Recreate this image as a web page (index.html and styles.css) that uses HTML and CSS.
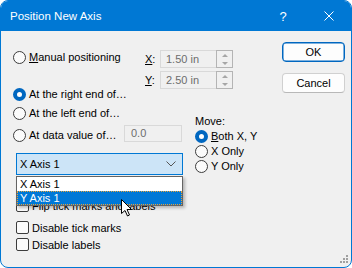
FILE: index.html
```html
<!DOCTYPE html>
<html>
<head>
  <meta charset="UTF-8">
  <title>Position New Axis</title>
  <link rel="stylesheet" href="styles.css">
</head>
<body>
  <div class="window">
    <div class="titlebar">
      <span class="title">Position New Axis</span>
      <span class="tb-btn help">?</span>
      <span class="tb-btn close">
        <svg width="10" height="10" viewBox="0 0 10 10"><path d="M0.5 0.5 L9.5 9.5 M9.5 0.5 L0.5 9.5" stroke="#fff" stroke-width="1"/></svg>
      </span>
    </div>

    <div class="client">
      <div class="left">
        <div class="row-manual">
          <label class="radio"><span class="circle"></span><span><u>M</u>anual positioning</span></label>
          <div class="xy">
            <span class="xy-label"><u>X</u>:</span>
            <div class="spin-field">
              <span class="spin-value">1.50 in</span>
              <span class="spin-btns"><i class="arrow-up"></i><i class="arrow-down"></i></span>
            </div>
            <span class="xy-label"><u>Y</u>:</span>
            <div class="spin-field">
              <span class="spin-value">2.50 in</span>
              <span class="spin-btns"><i class="arrow-up"></i><i class="arrow-down"></i></span>
            </div>
          </div>
        </div>

        <label class="radio opt-right"><span class="circle checked"></span><span>At the right end of…</span></label>

        <div class="lower">
          <div class="lower-main">
            <label class="radio"><span class="circle"></span><span>At the left end of…</span></label>
            <div class="data-row">
              <label class="radio"><span class="circle"></span><span>At data value of…</span></label>
              <span class="data-field">0.0</span>
            </div>
            <div class="combo-wrap">
              <div class="combo">
                <span>X Axis 1</span>
                <svg width="10" height="6" viewBox="0 0 10 6"><path d="M0.5 0.5 L5 5 L9.5 0.5" fill="none" stroke="#555" stroke-width="1"/></svg>
              </div>
              <ul class="combo-list">
                <li>X Axis 1</li>
                <li class="selected">Y Axis 1</li>
              </ul>
            </div>
            <div class="checks">
              <label class="check flip"><span class="box"></span><span>Flip tick marks and labels</span></label>
              <label class="check"><span class="box"></span><span>Disable tick marks</span></label>
              <label class="check"><span class="box"></span><span>Disable labels</span></label>
            </div>
          </div>

          <div class="move">
            <div class="move-title">Move:</div>
            <label class="radio"><span class="circle checked"></span><span><u>B</u>oth X, Y</span></label>
            <label class="radio"><span class="circle"></span><span>X Only</span></label>
            <label class="radio"><span class="circle"></span><span>Y Only</span></label>
          </div>
        </div>
      </div>

      <div class="buttons">
        <button class="btn default">OK</button>
        <button class="btn">Cancel</button>
      </div>
    </div>

    <svg class="cursor" width="12" height="18" viewBox="0 0 12 18">
      <path d="M0.5 0.5 L0.5 14.5 L4 11.5 L6.5 17 L8.5 16 L6 10.5 L10.5 10.5 Z" fill="#fff" stroke="#000" stroke-width="1" stroke-linejoin="round"/>
    </svg>

    <svg class="grip" width="10" height="10" viewBox="0 0 10 10">
      <rect x="7" y="0" width="2" height="2" fill="#a0a0a0"/>
      <rect x="4" y="3" width="2" height="2" fill="#a0a0a0"/>
      <rect x="7" y="3" width="2" height="2" fill="#a0a0a0"/>
      <rect x="1" y="6" width="2" height="2" fill="#a0a0a0"/>
      <rect x="4" y="6" width="2" height="2" fill="#a0a0a0"/>
      <rect x="7" y="6" width="2" height="2" fill="#a0a0a0"/>
    </svg>
  </div>
</body>
</html>
```

FILE: styles.css
```css
body {
  margin: 0;
  background: #ffffff;
  font-family: 'Liberation Sans', Arial, sans-serif;
  font-size: 11px;
  color: #000000;
}
.window {
  position: relative;
  width: 352px;
  height: 268px;
  box-sizing: border-box;
  border: 1px solid #0078d4;
  border-radius: 8px;
  background: #f0f0f0;
  overflow: hidden;
}
.titlebar {
  height: 30px;
  margin: -1px -1px 0 -1px;
  padding-top: 1px;
  background: #0078d4;
  color: #ffffff;
  display: flex;
  align-items: center;
}
.title {
  flex-grow: 1;
  padding-left: 10px;
  font-size: 11.5px;
}
.tb-btn {
  width: 46px;
  height: 30px;
  display: flex;
  align-items: center;
  justify-content: center;
}
.help {
  font-size: 13px;
}

.client {
  display: flex;
  height: 236px;
}
.left {
  width: 269px;
  padding: 18px 0 0 12px;
}
.buttons {
  display: flex;
  flex-direction: column;
  gap: 11px;
  padding-top: 11px;
}
.btn {
  width: 63px;
  height: 20px;
  padding: 0;
  font-family: inherit;
  font-size: 11px;
  color: #000;
  background: #fdfdfd;
  border: 1px solid #d0d0d0;
  border-bottom-color: #b8b8b8;
  border-radius: 4px;
}
.btn.default {
  border: 1px solid #0067c0;
  box-shadow: inset 0 0 0 0.5px #0067c0;
}

/* radios and checkboxes */
.radio, .check {
  display: flex;
  align-items: center;
  gap: 3px;
  height: 16px;
  white-space: nowrap;
}
.circle {
  width: 13px;
  height: 13px;
  box-sizing: border-box;
  border: 1px solid #3c3c3c;
  border-radius: 50%;
  background: #fbfbfb;
  flex-shrink: 0;
}
.circle.checked {
  border: 4px solid #0067c0;
  background: #ffffff;
}
.box {
  width: 13px;
  height: 13px;
  box-sizing: border-box;
  border: 1px solid #3c3c3c;
  border-radius: 2px;
  background: #fbfbfb;
  flex-shrink: 0;
}

.row-manual {
  display: grid;
  grid-template-columns: 132px auto;
  align-items: start;
}
.xy {
  margin-top: 1px;
  display: grid;
  grid-template-columns: 15px 73px;
  grid-auto-rows: 18px;
  row-gap: 3px;
  align-items: center;
}
.spin-field {
  display: flex;
  height: 18px;
}
.spin-value {
  width: 56px;
  box-sizing: border-box;
  border: 1px solid #d9d9d9;
  border-right: none;
  padding-left: 5px;
  color: #6d6d6d;
  line-height: 16px;
}
.spin-btns {
  width: 17px;
  box-sizing: border-box;
  border: 1px solid #b4b4b4;
  display: flex;
  flex-direction: column;
  align-items: center;
  justify-content: space-around;
  background: #f0f0f0;
}
.spin-btns i {
  width: 0;
  height: 0;
  border-left: 3px solid transparent;
  border-right: 3px solid transparent;
}
.arrow-up { border-bottom: 3px solid #a6a6a6; }
.arrow-down { border-top: 3px solid #a6a6a6; }

.opt-right {
  margin-top: -3px;
}

.lower {
  display: flex;
  margin-top: 3px;
}
.lower-main {
  width: 182px;
}
.data-row {
  display: grid;
  grid-template-columns: 111px 58px;
  align-items: end;
  margin-top: 4px;
  height: 17px;
}
.data-row .radio {
  margin-bottom: -1px;
}
.data-field {
  height: 17px;
  box-sizing: border-box;
  border: 1px solid #d9d9d9;
  padding-left: 6px;
  color: #6d6d6d;
  line-height: 15px;
}

.combo-wrap {
  position: relative;
  margin: 11px 0 0 3px;
  width: 167px;
}
.combo {
  height: 22px;
  box-sizing: border-box;
  border: 1px solid #0078d4;
  background: #cce4f7;
  display: flex;
  align-items: center;
  justify-content: space-between;
  padding: 0 6px 0 3px;
}
.combo-list {
  position: absolute;
  top: 23px;
  left: 0;
  right: 0;
  margin: 0;
  padding: 0;
  list-style: none;
  background: #ffffff;
  border: 1px solid #646464;
  box-shadow: 2px 2px 3px rgba(0, 0, 0, 0.25);
  z-index: 5;
}
.combo-list li {
  height: 14px;
  line-height: 14px;
  padding-left: 3px;
}
.combo-list li.selected {
  background: #0078d7;
  color: #ffffff;
  outline: 1px dotted #e7a33a;
  outline-offset: -1px;
}

.checks {
  margin: 22px 0 0 3px;
}
.check {
  height: 17px;
}
.check.flip {
  margin-bottom: 5px;
}

.move {
  margin-top: 9px;
}
.move-title, .move .radio {
  height: 15px;
  line-height: 15px;
}

.cursor {
  position: absolute;
  left: 120px;
  top: 198px;
  z-index: 10;
}
.grip {
  position: absolute;
  right: 2px;
  bottom: 2px;
}
```
